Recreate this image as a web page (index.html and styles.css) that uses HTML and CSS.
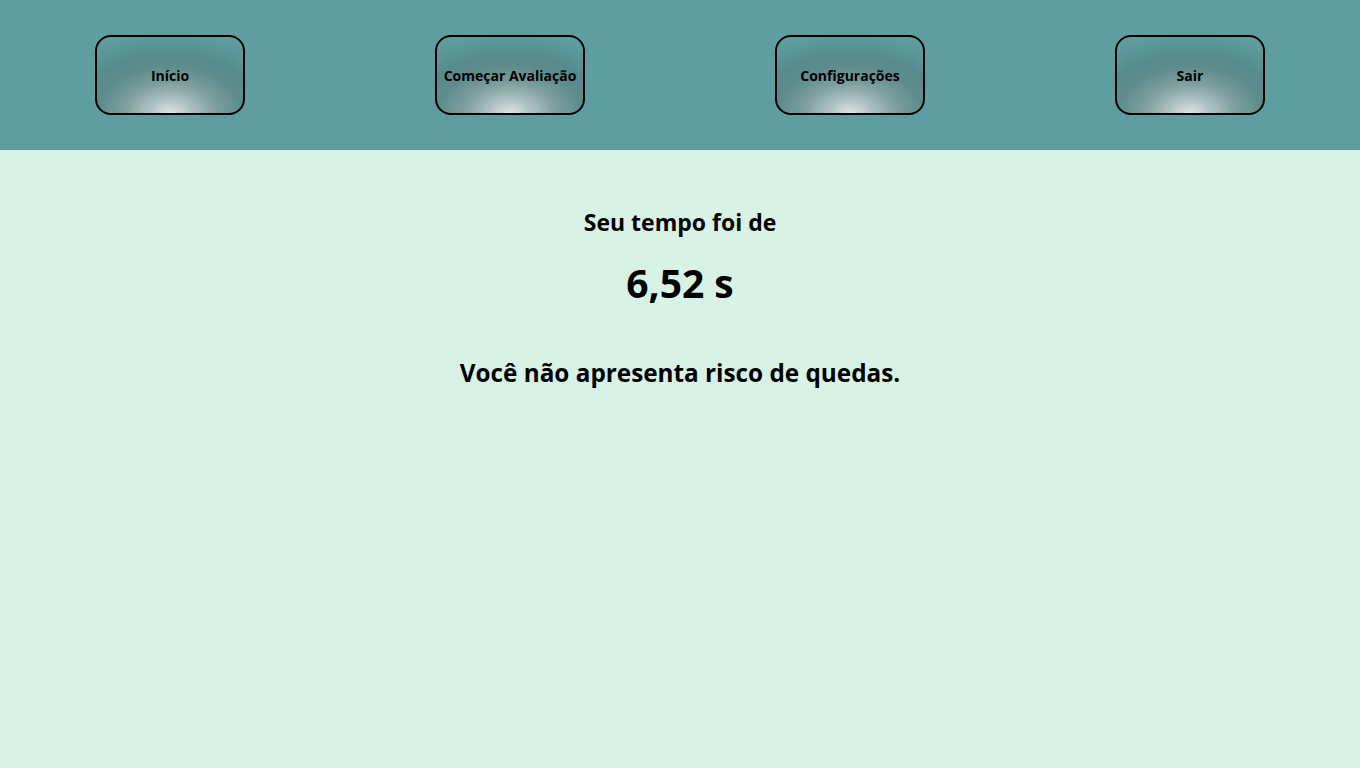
FILE: index.html
```html
<!DOCTYPE html>
<html lang="pt-BR">
<head>
<meta charset="utf-8">
<title>Resultado</title>
<link rel="stylesheet" href="styles.css">
</head>
<body>
<header class="topbar">
  <nav class="nav">
    <div class="nav-cell"><button class="nav-btn">Início</button></div>
    <div class="nav-cell"><button class="nav-btn">Começar Avaliação</button></div>
    <div class="nav-cell"><button class="nav-btn">Configurações</button></div>
    <div class="nav-cell"><button class="nav-btn">Sair</button></div>
  </nav>
</header>
<main class="content">
  <h2 class="label">Seu tempo foi de</h2>
  <h1 class="time">6,52 s</h1>
  <h2 class="result">Você não apresenta risco de quedas.</h2>
</main>
</body>
</html>
```

FILE: styles.css
```css
html, body {
  margin: 0;
  padding: 0;
}
body {
  background: #d8f2e5;
  font-family: "Open Sans", "Noto Sans", sans-serif;
  color: #000;
  min-height: 768px;
}
.topbar {
  background: #5f9ea0;
  height: 150px;
}
.nav {
  display: grid;
  grid-template-columns: repeat(4, 1fr);
  height: 100%;
  align-items: center;
}
.nav-cell {
  display: flex;
  justify-content: center;
}
.nav-btn {
  width: 150px;
  height: 80px;
  border: 2px solid #000;
  border-radius: 16px;
  padding: 0;
  font-family: "Open Sans", "Noto Sans", sans-serif;
  font-weight: 700;
  font-size: 14px;
  color: #000;
  background: radial-gradient(ellipse 130px 84px at 50% 100%, #dfe4e4 0%, #b2c4c4 15%, #7f9fa0 35%, #5e8c8d 55%, #568b8d 70%, #5b9698 85%, #5f9ea0 100%);
}
.content {
  display: flex;
  flex-direction: column;
  align-items: center;
  padding-top: 56px;
}
.label {
  margin: 0;
  font-size: 23px;
  font-weight: 700;
  line-height: 32px;
}
.time {
  margin: 20px 0 0;
  font-size: 39px;
  font-weight: 700;
  line-height: 50px;
}
.result {
  margin: 48px 0 0;
  font-size: 24.3px;
  font-weight: 700;
  line-height: 34px;
}
```
